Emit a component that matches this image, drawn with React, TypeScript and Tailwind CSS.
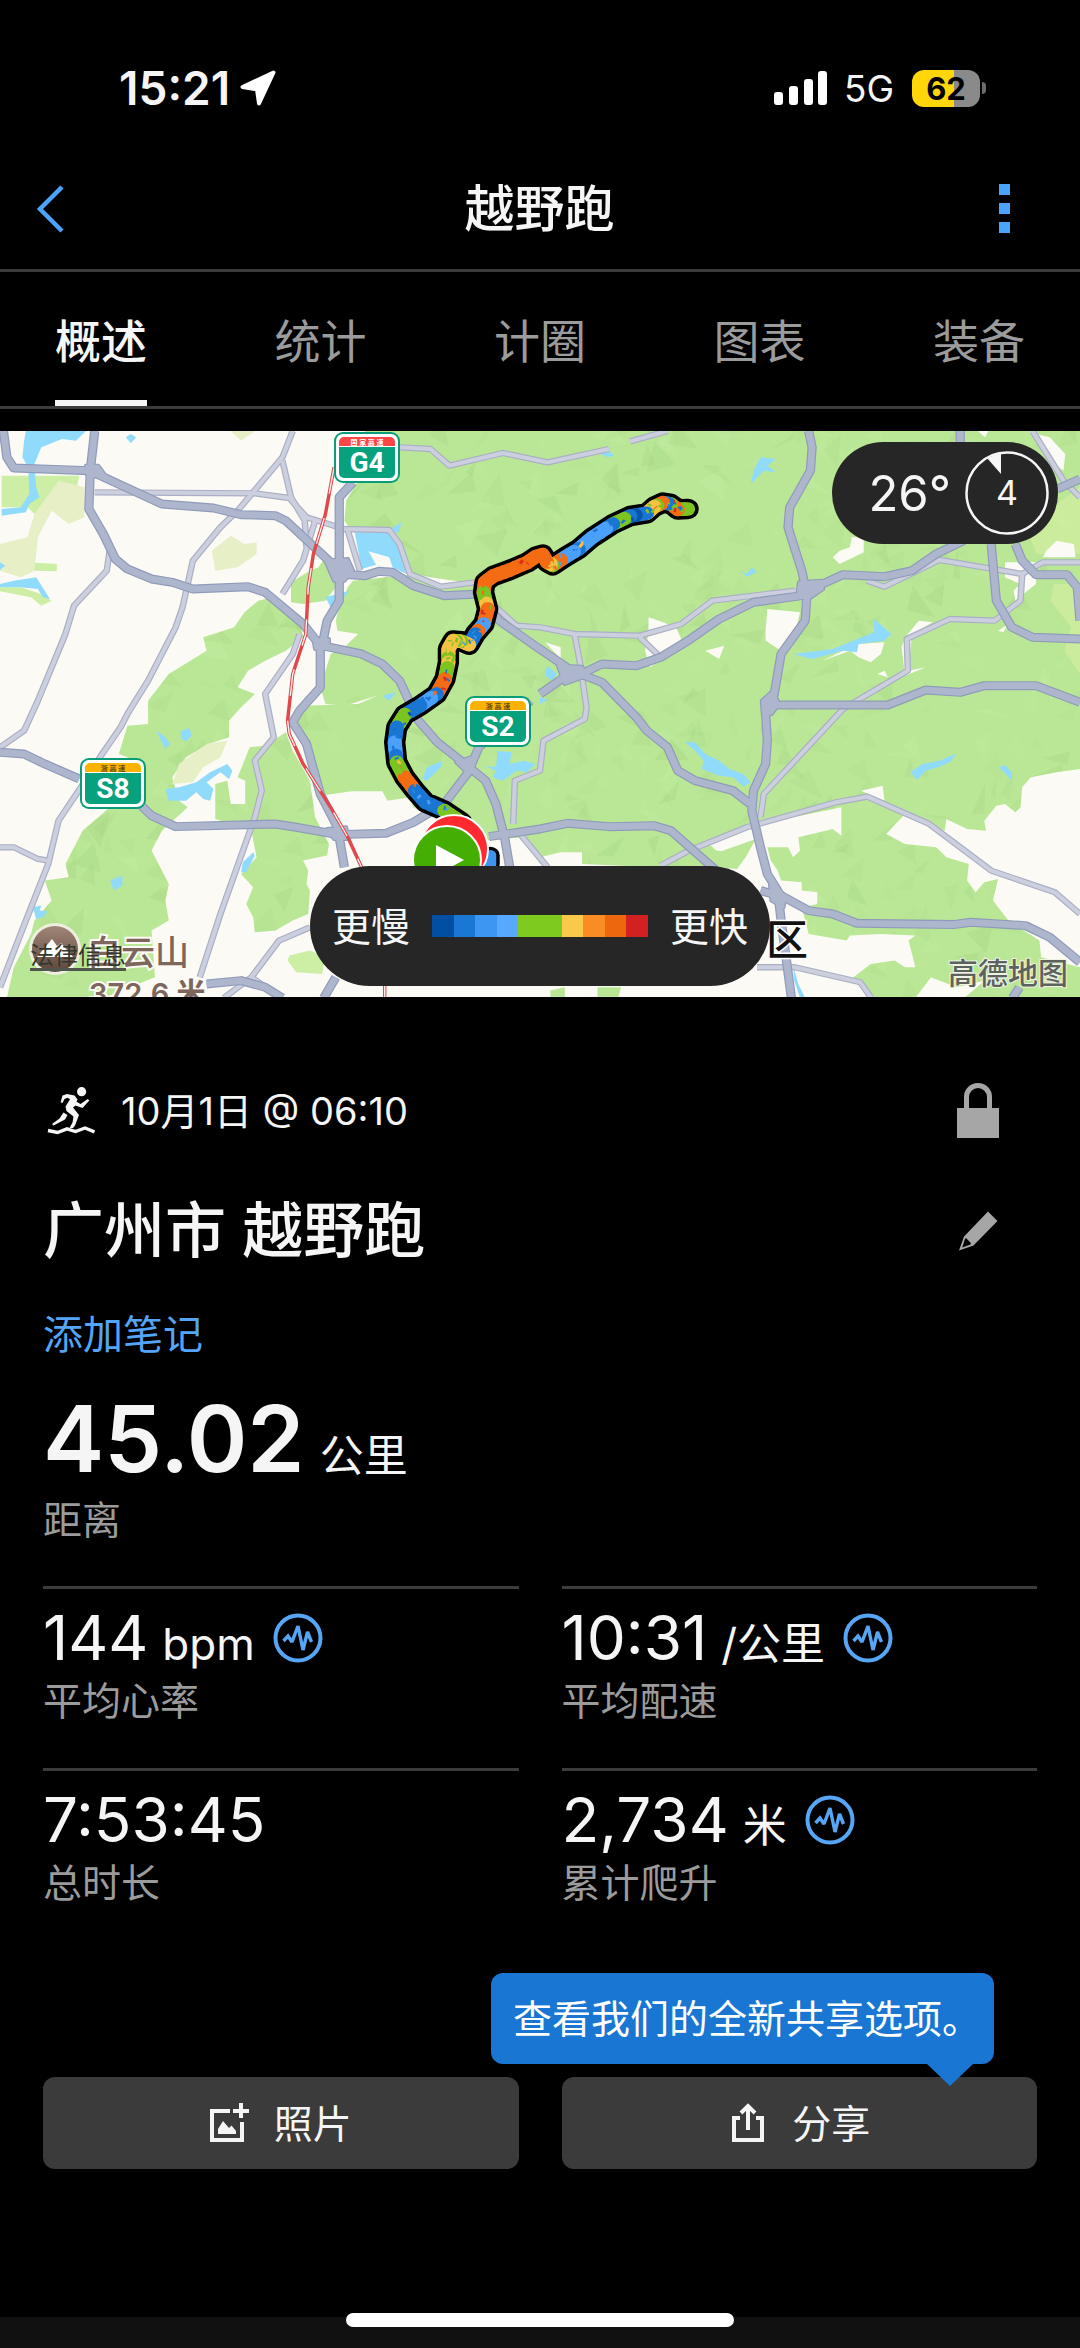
import React from "react";

const FONT =
  "font-[Inter,'Noto_Sans_CJK_SC',sans-serif]";

/* ---------- map data ---------- */

const GREEN = [
  "M1060 31H3136V1732H1568V1330L1520 1250L1400 1260L1260 1190L1200 1160L1190 1130L1125 1140L1110 1112L1020 1112L930 1125L880 960L855 900L880 855L1040 850L1095 825L1000 855L945 850L930 800L945 750L960 700L1000 680L1040 640L980 630L975 600L985 560L1010 500L1025 480L1160 465L1190 462L1240 490L1380 490L1250 470L1180 455L1130 330H1020L1000 300L1005 240L1040 180Z",
  "M845 485L900 450L925 440L950 400L970 440L975 500L945 540L880 550L845 545Z",
  "M750 540L790 530L830 580L870 600L880 650L830 690L770 720L720 750L690 800L740 820L700 860L665 900V950L605 970L540 1010L500 1070L520 1140L545 1160L470 1230L440 1290L490 1390L480 1440L490 1500L440 1530L450 1670L300 1732H20L40 1640L90 1540L100 1500L150 1440L130 1380L200 1370L190 1330L240 1230L375 1110L370 1010L345 1000L370 915L430 910V840L490 760L600 690L590 650L680 620L710 575Z",
  "M725 980L770 975L830 935L850 990L900 1080L915 1190L955 1270L950 1305L880 1320L895 1350L890 1390L900 1410L895 1480L850 1500L800 1530L740 1535L735 1490L715 1450L735 1400L700 1360L745 1310L730 1230L625 1195V1090L660 1080L670 1150H712V1080L690 1070Z",
].join("");

const LIGHT_GREEN =
  "M5 165H230L215 240L140 240L120 300L80 260H5ZM80 425L165 430V452L100 450ZM0 500L60 500L120 520L150 540L120 555L90 530L0 512ZM840 1605L900 1590L945 1610L935 1660L860 1655L835 1620Z";

const OLIVE =
  "M170 180L245 200V290L200 310L150 270L110 350L100 450L60 470L0 450V370L80 350L100 280ZM615 390L670 345L710 370L745 365V400L690 440L625 450ZM670 31H740L700 60ZM600 970L660 960L640 1010L590 1040L560 1085L500 1090L520 1030Z";

const LIME =
  "M3136 200L3040 270L2990 350L3010 400H3136ZM3060 490H3136V760L3090 690L3110 620L3050 540Z";

const LAND = [
  "M2048 1260L2208 1210L2443 1160V1245L2418 1225L2318 1250L2323 1290L2303 1310L2288 1280H2228L2238 1320L2258 1350L2268 1380L2328 1385V1410L2373 1415V1450L2328 1460L2348 1540L2458 1560L2468 1545L2558 1540L2658 1545L2638 1560L2658 1640H2628L2598 1620L2528 1630L2478 1670L2498 1700L2543 1732H1568V1310L1628 1295H1690V1330L1900 1340L2090 1340L2170 1300L2080 1290Z",
  "M3136 1045L3068 1055L2993 1070L2968 1100L2963 1160L2948 1175L2918 1150L2893 1155L2858 1200L2863 1230L2808 1225L2748 1195L2743 1230L2698 1210L2628 1180L2573 1240L2628 1270L2718 1280L2748 1310L2813 1330L2808 1380L2833 1415L2858 1385L2898 1375L2883 1440L2928 1500L3018 1560L3023 1610L3136 1640Z",
  "M2658 1732L2703 1670L2778 1700L2860 1680L2800 1732ZM2500 1110L2563 1095L2568 1140Z",
  "M2473 350H2508V395L2468 415L2438 430L2418 410L2438 390L2468 380ZM2228 565L2323 575L2308 640L2268 690L2223 660V630Z",
  "M1883 590L1913 600L1963 620L1978 655L1938 700L1888 740L1873 690L1883 640ZM2048 690L2103 675L2088 715ZM1583 665L1628 680V715ZM2493 670L2568 665L2558 700L2528 725L2493 710L2468 690L2388 720L2428 700Z",
  "M2628 650L2668 600L2708 605L2648 640L2638 750L2688 740L2628 765L2618 680ZM2548 760L2568 750L2578 770ZM2918 425H3008V490L2948 540L2943 510L2963 490L2918 470ZM3038 390L3068 360L3118 370L3123 410H3028ZM2988 35L3048 50L3093 100L3088 150L3048 120ZM2840 31H2870L2860 50ZM2898 630L2928 610L2913 635Z",
].join("");

const PATCHES =
  "M1598 1710L1640 1700V1732H1598ZM1735 1700H1803L1795 1732H1735ZM2100 1290L2195 1255L2165 1310L2140 1345L2090 1340Z";

const WATER = [
  "M75 31H250L220 60L180 55L120 80L100 130L105 200L115 230L85 250L75 275L5 285V265L60 260L85 220L82 140L65 110L70 60ZM365 50L380 40L395 50L380 68Z",
  "M1030 335H1130L1155 370L1180 460L1140 440L1130 410L1070 392L1092 432L1050 445ZM1135 325L1165 305L1160 330L1145 340ZM0 490L40 480L105 470L130 510L145 535L125 530L110 505L60 500L0 500ZM0 425L15 435L0 448Z",
  "M945 530L1015 510L990 540L960 560ZM1110 825L1150 815L1130 840ZM455 930L480 950L495 970L480 985L465 955ZM525 930L550 923L557 945L540 962L525 955Z",
  "M480 1105L520 1100L570 1085L610 1055L660 1030L675 1050L665 1075L640 1055L600 1085L620 1105L610 1140L590 1135L570 1115L540 1140H490ZM320 1380L355 1365V1395L330 1410ZM95 1460L120 1455L115 1470L138 1472L125 1490L105 1495ZM735 1295L740 1305L715 1355H700L705 1325Z",
  "M1225 1075L1240 1040L1285 1020L1280 1040L1240 1080ZM1405 1035L1440 1040L1445 990L1485 995L1480 1030L1520 1020L1555 1030L1530 1055L1500 1050L1460 1080L1430 1070L1440 1050ZM1588 735L1618 760L1603 780L1583 765ZM1568 830L1590 838L1568 850Z",
  "M2208 110L2253 115L2228 135L2253 155L2218 150L2180 190L2188 150ZM2148 450L2168 460L2183 440L2198 455L2168 468ZM2303 700L2418 685L2538 635V595L2588 640L2568 660L2493 670L2488 695L2448 690L2358 715ZM1733 95L1768 90L1783 105L1763 110Z",
  "M1988 965L2018 965L2048 1000L2088 1020L2118 1045L2158 1060L2180 1085L2158 1098L2128 1070L2088 1065L2038 1045L2043 1020L2018 990ZM2643 1055L2678 1030L2728 1020L2778 998L2758 1025L2728 1038L2688 1050L2663 1078ZM2901 1040L2918 1033L2938 1055L2936 1078ZM2303 1635L2318 1690L2338 1732H2323L2306 1680Z",
].join("");

const MINOR = [
  "M850 31L820 110L690 270L640 320L560 420L530 560L510 620L430 780L370 880L350 920L290 1010L235 1100L170 1200L140 1330L60 1540L0 1700",
  "M275 215L740 218L840 232L890 290L1000 325L1130 328L1160 370L1190 460L1280 498L1380 485",
  "M820 120L845 230L885 300L890 380M915 300L880 420L820 520M1010 330L1045 450",
  "M320 380L310 450L215 555L190 640L110 840L70 930L0 980",
  "M870 640L850 700L770 820L795 950L740 1020L760 1110L740 1190L640 1480L580 1670",
  "M0 1280H40L110 1315L140 1320",
  "M1160 80L1250 85L1305 135L1460 97L1590 125L1768 85M1830 62L1938 31",
  "M900 1520L810 1560L730 1670L650 1732M730 1670L800 1720",
  "M1568 620L1668 640L1858 645L1978 610L2068 540L2308 510M1668 640L1683 720L1703 860L1698 895L1578 960L1568 1050L1495 1080L1490 1210M1440 560L1500 615L1568 620M1858 650L1913 705",
  "M2518 480L2568 498L2728 418L2968 460L3028 425H3136M2968 460L2963 540L2888 600L2758 595L2633 655L2636 750L2448 865L2218 1120L2208 1190",
  "M1918 1335L2000 1290L2168 1220L2428 1145L2518 1128L2698 1210L2878 1350L3063 1415L3136 1480",
  "M2198 1640H2308L2498 1685L2530 1732M2998 31L3088 180L3136 230M1510 1240L1590 1340",
];

const MAJOR = [
  "M10 31L20 110L40 142L260 150L470 250L620 262L700 282L800 285L830 300L960 425L985 460L1060 465L1100 452L1140 455L1200 495L1290 525L1390 520L1450 600L1560 680L1660 750",
  "M275 31L262 150L258 265L300 340L335 415L370 445L440 475L500 485L560 505L720 498L770 515L880 610L930 675V800L870 870L850 905L890 970L930 1120L980 1220L1000 1340",
  "M1025 185L985 230V540L950 600L935 675L1050 700L1110 730L1160 780L1215 900L1270 965L1350 1030L1410 1080L1440 1150L1465 1250L1480 1340",
  "M0 995L70 1000L130 1030L230 1075M410 1155L440 1185L510 1218L800 1210L860 1220L980 1242L1120 1238L1200 1205L1290 1150L1330 1095L1360 1055L1390 980L1540 840",
  "M1420 1248L1568 1225L1648 1208L1768 1218L1898 1215L1948 1230L2080 1350",
  "M1660 750L1748 785L1848 890L1878 930L1938 980L1968 1050L2018 1080L2128 1110L2178 1150",
  "M1568 820L1638 770L1698 755L1748 730L1848 735L1918 710L1998 660L2088 595L2188 545L2328 525L2388 490L2448 462L2568 468L2648 450L2718 400L2798 360",
  "M2348 31L2358 80L2353 150L2293 260L2288 320L2328 450L2343 520L2338 600L2268 700L2248 820L2223 880L2228 960L2223 1030L2188 1110L2183 1170L2208 1280L2228 1360L2258 1410L2268 1500L2298 1732",
  "M2240 853H2578L2688 808L2788 815L2858 795H3008L3136 845",
  "M2208 1410L2278 1430L2348 1470L2418 1480L2488 1508L2768 1512L2818 1505L2978 1515L3048 1550L3136 1625",
  "M2878 370L2893 540L2938 620L2998 650L3136 655M2948 370L2968 420L3008 462H3098L3128 500L3136 600M3070 205L3136 175M2788 31V65",
  "M600 1690L700 1680L770 1700L820 1732M940 1732L975 1670M2940 1732L2960 1700",
];

const JUNCTIONS =
  "M1620 735L1690 738L1706 765L1640 790ZM2320 485L2385 480L2390 505L2355 530L2315 525ZM2212 840L2245 810L2262 850L2240 880L2215 880ZM945 420L1010 415L1025 450L1000 480L970 480ZM910 655L955 655L955 685L915 685ZM950 1225L1005 1220L1012 1255L970 1255ZM250 135L285 135L310 170L255 165ZM1325 1025L1380 1005L1375 1035L1350 1050ZM2235 1380L2280 1425L2275 1460L2240 1440Z";

const RAIL = [
  "M970 140L945 280L910 400L895 500L888 640L850 760L835 900L840 940L880 1030L960 1160L1010 1250L1050 1340M1117 1690V1732",
];

/* Track points with the pace colour code of the section that starts there. */
const TRACK: [number, number, string][] = [
  [1998, 265, "gob"], [1968, 266, "or"], [1948, 250, "bg"], [1925, 246, "og"], [1900, 258, "yg"], [1878, 278, "nb"],
  [1830, 286, "gb"], [1780, 310, "lb"], [1720, 350, "lyg"], [1680, 385, "lb"], [1640, 410, "ogl"],
  [1605, 434, "yg"], [1588, 424, "o"], [1576, 402, "o"], [1556, 408, "or"], [1530, 426, "ro"], [1480, 448, "o"], [1432, 466, "o"],
  [1408, 485, "o"], [1404, 515, "goy"], [1416, 565, "or"], [1405, 610, "lo"], [1380, 640, "bl"], [1362, 672, "yl"],
  [1340, 662, "gy"], [1316, 660, "yg"], [1302, 685, "yg"], [1302, 725, "gby"], [1292, 775, "or"], [1268, 820, "lb"],
  [1220, 855, "bn"], [1175, 882, "gb"], [1152, 920, "bn"], [1146, 965, "lb"], [1152, 1025, "gyo"],
  [1175, 1070, "o"], [1205, 1110, "bl"], [1235, 1145, "bl"], [1290, 1170, "gl"], [1340, 1205, "b"],
];

const PACE: Record<string, string> = {
  n: "#0a55ab", b: "#1976d2", l: "#4aa0fa", g: "#7cc420",
  y: "#f5c244", o: "#f46c14", r: "#dc2c1e",
};

function random(seed: number) {
  let s = seed;
  return () => {
    s = (s + 0x6d2b79f5) | 0;
    let t = Math.imul(s ^ (s >>> 15), 1 | s);
    t = (t + Math.imul(t ^ (t >>> 7), 61 | t)) ^ t;
    return ((t ^ (t >>> 14)) >>> 0) / 4294967296;
  };
}

function trackPieces() {
  const rnd = random(11);
  const out: { d: string; c: string }[] = [];
  for (let i = 0; i < TRACK.length - 1; i++) {
    const [x1, y1, code] = TRACK[i];
    const [x2, y2] = TRACK[i + 1];
    const n = 3;
    for (let k = 0; k < n; k++) {
      const ax = x1 + ((x2 - x1) * k) / n;
      const ay = y1 + ((y2 - y1) * k) / n;
      const bx = x1 + ((x2 - x1) * (k + 1)) / n;
      const by = y1 + ((y2 - y1) * (k + 1)) / n;
      const pick = rnd() > 0.45 ? 0 : Math.floor(rnd() * code.length);
      out.push({ d: `M${ax} ${ay}L${bx} ${by}`, c: PACE[code[pick]] });
    }
  }
  return out;
}

function trackFlecks() {
  const rnd = random(23);
  return TRACK.flatMap(([x, y, code], i) => {
    if (i === TRACK.length - 1) return [];
    const [x2, y2] = TRACK[i + 1];
    return [0.2, 0.5, 0.8].map((t) => {
      const fx = x + (x2 - x) * t + (rnd() - 0.5) * 22;
      const fy = y + (y2 - y) * t + (rnd() - 0.5) * 22;
      return {
        d: `M${fx.toFixed(1)} ${fy.toFixed(1)}l${(rnd() * 16 - 8).toFixed(1)} ${(rnd() * 12 - 6).toFixed(1)}`,
        c: PACE[code[Math.floor(rnd() * code.length)]],
      };
    });
  });
}

function hillFacets() {
  const rnd = random(5);
  return Array.from({ length: 700 }, () => {
    const x = rnd() * 3136;
    const y = rnd() * 1732;
    const pts = [0, 1, 2].map((k) => {
      const angle = (k * 2 * Math.PI) / 3 + rnd() * 1.6;
      const r = 14 + rnd() * 52;
      return `${(x + Math.cos(angle) * r).toFixed(1)} ${(y + Math.sin(angle) * r).toFixed(1)}`;
    });
    return {
      d: `M${pts.join("L")}Z`,
      c: rnd() > 0.4 ? "#a0d07e" : "#c6eea6",
      o: 0.08 + rnd() * 0.22,
    };
  });
}

const TRACK_LINE = "M" + TRACK.map(([x, y]) => `${x} ${y}`).join("L");
const PIECES = trackPieces();
const FLECKS = trackFlecks();
const FACETS = hillFacets();

function RoadSign({ x, y, band, text, tag, tagFill }: {
  x: number; y: number; band: string; text: string; tag: string; tagFill: string;
}) {
  return (
    <g transform={`translate(${x} ${y})`}>
      <rect width="66" height="51" rx="9" fill="#0a9c78" />
      <rect x="2" y="2" width="62" height="47" rx="7" fill="#fff" />
      <path d="M5 15H61V41a5 5 0 0 1-5 5H10a5 5 0 0 1-5-5Z" fill="#08a17d" />
      <path d="M5 14V10a5 5 0 0 1 5-5H56a5 5 0 0 1 5 5V14Z" fill={band} />
      <text x="33" y="13" textAnchor="middle" fontSize="7" fontWeight="700" fill={tagFill}>{tag}</text>
      <text x="33" y="40" textAnchor="middle" fontSize="28" fontWeight="700" fill="#fff" className="font-[Roboto,sans-serif]">{text}</text>
    </g>
  );
}

function RouteMap() {
  return (
    <svg viewBox="0 0 1080 566" preserveAspectRatio="xMidYMid slice" className="block size-full" role="img" aria-label="路线地图">
      <defs>
        <clipPath id="woods"><path d={GREEN} /></clipPath>
        <linearGradient id="peak" x1="0" y1="0" x2="0" y2="1">
          <stop offset="0" stopColor="#a08679" />
          <stop offset="1" stopColor="#5f463b" />
        </linearGradient>
      </defs>
      <rect width="1080" height="566" fill="#fbfaf4" />
      <g transform="scale(.3444 .3333) translate(0 -31)" strokeLinejoin="round">
        <path d={GREEN} fill="#bae796" />
        <g clipPath="url(#woods)">
          {FACETS.map((f, i) => <path key={i} d={f.d} fill={f.c} opacity={f.o} />)}
        </g>
        <path d={LIGHT_GREEN} fill="#cdefa5" />
        <path d={OLIVE} fill="#e6efc6" />
        <path d={LIME} fill="#cfec9f" opacity=".8" />
        <path d={LAND} fill="#fbfaf4" />
        <path d={PATCHES} fill="#bae796" />
        <path d={WATER} fill="#90dbfb" />
        <g fill="none">
          {MINOR.map((d) => <path key={d} d={d} stroke="#abafc6" strokeWidth="19" />)}
          {MINOR.map((d) => <path key={d} d={d} stroke="#cccfdd" strokeWidth="12" />)}
          <path d={JUNCTIONS} stroke="#8f9bba" strokeWidth="12" />
          {MAJOR.map((d) => <path key={d} d={d} stroke="#8f9bba" strokeWidth="27" />)}
          {MAJOR.map((d) => <path key={d} d={d} stroke="#adb6cc" strokeWidth="20" />)}
          <path d={JUNCTIONS} fill="#adb6cc" stroke="#adb6cc" strokeWidth="5" />
          {RAIL.map((d) => (
            <g key={d}>
              <path d={d} stroke="#e0484c" strokeWidth="10" />
              <path d={d} stroke="#fdeeee" strokeWidth="4" strokeDasharray="80 75" />
            </g>
          ))}
          <g strokeLinecap="round">
            <path d="M1424 1305V1330" stroke="#000" strokeWidth="54" />
            <path d="M1424 1305V1330" stroke="#3f95ee" strokeWidth="34" />
            <path d={TRACK_LINE} stroke="#000" strokeWidth="62" />
            {PIECES.map((p, i) => <path key={i} d={p.d} stroke={p.c} strokeWidth="41" />)}
          </g>
          {FLECKS.map((f, i) => <path key={i} d={f.d} stroke={f.c} strokeWidth="13" />)}
        </g>
      </g>

      <circle cx="454" cy="418" r="34" fill="#ff2a30" stroke="#fff" strokeWidth="2" />
      <circle cx="447" cy="429" r="34" fill="#45ae02" stroke="#fff" strokeWidth="2" />
      <path d="M436 414L464 429L436 444Z" fill="#fff" />

      <RoadSign x={334} y={1} band="#fc4545" text="G4" tag="国 家 高 速" tagFill="#fff" />
      <RoadSign x={465} y={265} band="#fbb200" text="S2" tag="浙 高 速" tagFill="#5c4a10" />
      <RoadSign x={80} y={327} band="#fbb200" text="S8" tag="浙 高 速" tagFill="#5c4a10" />

      <circle cx="55" cy="518" r="26" fill="#f3f0e6" opacity=".9" />
      <circle cx="55" cy="518" r="23" fill="url(#peak)" />
      <path d="M37 526L47 514L52 508L57 515L61 512L73 526Z" fill="#fff" />
      <g fontWeight="500" fill="#7d665b" stroke="#fbfaf4" strokeWidth="4" paintOrder="stroke">
        <text x="87" y="534" fontSize="34">白云山</text>
        <text x="89" y="573" fontSize="29" fontWeight="600">372.6 米</text>
      </g>
      <text x="766" y="524" fontSize="42" fontWeight="500" fill="#111" stroke="#fff" strokeWidth="3" paintOrder="stroke">区</text>
      <text x="948" y="553" fontSize="30" fontWeight="500" fill="#5c625c" stroke="#eef3e6" strokeWidth="2" paintOrder="stroke">高德地图</text>
    </svg>
  );
}

/* ---------- small icons ---------- */

function PulseIcon() {
  return (
    <svg viewBox="0 0 50 50" className="size-[50px] shrink-0" fill="none" stroke="#57a5f5" aria-hidden="true">
      <circle cx="25" cy="25" r="22.5" strokeWidth="4" />
      <path d="M10.500 28L15 23L19 29L25 13L30 37L34.500 19L38.500 29" strokeWidth="3.400" strokeLinejoin="miter" strokeMiterlimit="2" />
    </svg>
  );
}

function StatusBar() {
  return (
    <div className="flex h-[148px] items-center justify-between pr-[94px] pb-[30px] pl-[119px] pt-[58px]">
      <div className="flex items-center gap-2.5">
        <span className="text-[46px] leading-none font-semibold">15:21</span>
        <svg viewBox="0 0 36 36" className="size-9" aria-hidden="true">
          <path d="M33.500 2.500L2.500 17L17 19.500L19 33.500Z" fill="#fff" stroke="#fff" strokeWidth="4" strokeLinejoin="round" />
        </svg>
      </div>
      <div className="flex items-center">
        <svg viewBox="0 0 54 34" className="h-[34px] w-[54px]" fill="#fff" aria-hidden="true">
          <rect x="0" y="21" width="9" height="13" rx="3" />
          <rect x="15" y="15" width="9" height="19" rx="3" />
          <rect x="30" y="8" width="9" height="26" rx="3" />
          <rect x="44" y="0" width="9" height="34" rx="3" />
        </svg>
        <span className="ml-4 text-[37px] leading-none">5G</span>
        <div className="ml-[18px] flex h-[37px] w-[68px] items-center justify-center rounded-xl bg-linear-to-r from-[#ffd60a] from-[62%] to-[#8a8a8a] to-[62%]">
          <span className="text-[31px] leading-none font-bold text-black">62</span>
        </div>
        <div className="ml-0.5 h-3 w-1 rounded-r-full bg-[#6b6b6b]" />
      </div>
    </div>
  );
}

const TABS = ["概述", "统计", "计圈", "图表", "装备"];
const SCALE = [
  "bg-[#004fa3]", "bg-[#1a77d3]", "bg-[#3c96f2]", "bg-[#56a9ff]", "bg-[#7fca1e]",
  "bg-[#7fca1e]", "bg-[#f9c94c]", "bg-[#fa8c26]", "bg-[#ec670d]", "bg-[#d32020]",
];

const STATS = [
  { value: "144", unit: "bpm", label: "平均心率", icon: true },
  { value: "10:31", unit: "/公里", label: "平均配速", icon: true },
  { value: "7:53:45", unit: "", label: "总时长", icon: false },
  { value: "2,734", unit: "米", label: "累计爬升", icon: true },
];

export default function App() {
  return (
    <div className={`flex min-h-screen flex-col bg-black text-[#f5f5f5] ${FONT}`}>
      <StatusBar />

      <header className="flex h-[124px] items-center justify-between border-b-3 border-[#3c3c3c] pr-[70px] pl-9">
        <button aria-label="返回">
          <svg viewBox="0 0 28 48" className="h-12 w-7" fill="none" aria-hidden="true">
            <path d="M26 2L4 24L26 46" stroke="#4ba3fc" strokeWidth="4.500" />
          </svg>
        </button>
        <h1 className="pl-4 text-[50px] leading-none font-medium">越野跑</h1>
        <button aria-label="更多" className="flex flex-col gap-2">
          <span className="size-[11px] bg-[#4ba3fc]" />
          <span className="size-[11px] bg-[#4ba3fc]" />
          <span className="size-[11px] bg-[#4ba3fc]" />
        </button>
      </header>

      <nav className="flex h-[137px] justify-between border-b-3 border-[#3c3c3c] px-[55px]">
        {TABS.map((t, i) => (
          <button
            key={t}
            className={
              i === 0
                ? "border-y-6 border-t-transparent border-b-[#f5f5f5] pt-1 text-[46px] leading-none font-medium"
                : "border-y-6 border-transparent pt-1 text-[46px] leading-none text-[#9b9b9b]"
            }
          >
            {t}
          </button>
        ))}
      </nav>

      <section className="relative mt-[22px] h-[566px] overflow-hidden">
        <RouteMap />
        <a href="#legal" className="absolute bottom-[26px] left-[30px] border-b-3 border-[#50564c] text-[24px] leading-none text-[#33382f]">
          法律信息
        </a>
        <div className="absolute top-[11px] right-[22px] flex h-[102px] items-center gap-3.5 rounded-full bg-[#262626] pr-[9px] pl-9">
          <span className="text-[49px] leading-none">26°</span>
          <svg viewBox="0 0 84 84" className="size-[84px]" aria-hidden="true">
            <circle cx="42" cy="42" r="40.500" fill="none" stroke="#f5f5f5" strokeWidth="2.500" />
            <path d="M22 7L36 2V23Z" fill="#f5f5f5" />
            <text x="42" y="54" textAnchor="middle" fontSize="34" fill="#f5f5f5">4</text>
          </svg>
        </div>
        <div className="absolute inset-x-0 bottom-[11px] flex justify-center">
          <div className="flex h-[120px] items-center gap-[22px] rounded-full bg-[#262626] px-[22px]">
            <span className="text-[39px] leading-none">更慢</span>
            <div className="flex h-[22px] w-[216px]">
              {SCALE.map((c, i) => <span key={i} className={`flex-1 ${c}`} />)}
            </div>
            <span className="text-[39px] leading-none">更快</span>
          </div>
        </div>
      </section>

      <main className="flex flex-col px-[43px] pt-[86px]">
        <div className="flex h-14 items-center justify-between pr-[37px] pl-1">
          <div className="flex items-center gap-[26px]">
            <svg viewBox="0 0 48 48" className="size-12" fill="#f5f5f5" aria-hidden="true">
              <circle cx="34.600" cy="4.700" r="4.600" />
              <path d="M15.500 8.500L20 7L27.500 8.500L30.500 12.500L29.500 14.800L33.500 17L40.800 12L42.300 13.500L35.500 21L28.500 18.500L26 20.500L32 28L28 38.500L26 41H22.500L25.500 35.500L26.500 29.500L19.500 24L18.500 19.500L23 12.200L20.500 10.800L17.500 12L15.500 16L13.600 15.200Z" />
              <path d="M16.500 25.500L20.500 28L18 32.500L6.500 38.500L5 37L12.500 31.500Z" />
              <path d="M1 43.500L10.500 45.500L20 41.800L28.500 44.500L38 41L47.500 45" fill="none" stroke="#f5f5f5" strokeWidth="3.400" />
            </svg>
            <span className="text-[38px] leading-none">10月1日 @ 06:10</span>
          </div>
          <svg viewBox="0 0 44 56" className="h-14 w-11" fill="#a6a6a6" role="img" aria-label="私密">
            <path d="M1 25H43V55H1Z" />
            <path d="M10.500 26V14a11.500 11.500 0 0 1 23 0V26" fill="none" stroke="#a6a6a6" strokeWidth="5" />
          </svg>
        </div>

        <div className="mt-[62px] flex h-[60px] items-center justify-between pr-[39px]">
          <h2 className="text-[61px] leading-none font-medium">广州市 越野跑</h2>
          <button aria-label="编辑">
            <svg viewBox="0 0 40 40" className="size-10" fill="#a6a6a6" aria-hidden="true">
              <path d="M30 0.500L39.500 10L15.500 34.500L1 39.500L6 25.500ZM6.800 28.500L4.200 36.500L12.500 33.500L12.800 32L8 27Z" fillRule="evenodd" />
            </svg>
          </button>
        </div>

        <button className="mt-[50px] h-12 self-start text-[40px] leading-none text-[#54a5f8]">添加笔记</button>

        <div className="mt-[34px] flex items-baseline gap-[15px]">
          <span className="text-[92px] leading-none font-semibold">45.02</span>
          <span className="text-[44px] leading-none">公里</span>
        </div>
        <p className="mt-[11px] text-[39px] leading-12 text-[#9b9b9b]">距离</p>

        <div className="mt-[42px] grid grid-cols-2 gap-x-[43px]">
          {STATS.map((s) => (
            <div key={s.label} className="h-[182px] border-t-3 border-[#3c3c3c] pt-[17px]">
              <div className="flex h-16 items-center gap-[18px]">
                <div className="flex items-baseline gap-[14px]">
                  <span className="text-[62px] leading-none">{s.value}</span>
                  {s.unit && <span className="text-[44px] leading-none">{s.unit}</span>}
                </div>
                {s.icon && <PulseIcon />}
              </div>
              <p className="mt-[7px] text-[39px] leading-12 text-[#9b9b9b]">{s.label}</p>
            </div>
          ))}
        </div>

        <div className="mt-[127px] grid grid-cols-2 gap-x-[43px]">
          <button className="flex h-[92px] items-center justify-center gap-6 rounded-xl bg-[#3b3b3b]">
            <svg viewBox="0 0 40 40" className="size-10" fill="#f5f5f5" aria-hidden="true">
              <path d="M0 6H20V10H4V35H30V19H34V39H0Z" />
              <path d="M29 0H33V6H39V10H33V15H29V10H23V6H29Z" />
              <path d="M8 31V26L13 18L19 25L21.500 22.500L26 28V31Z" />
            </svg>
            <span className="text-[39px] leading-none">照片</span>
          </button>
          <div className="relative">
            <button className="flex h-[92px] w-full items-center justify-center gap-6 rounded-xl bg-[#3b3b3b]">
              <svg viewBox="0 0 40 40" className="size-10" fill="none" stroke="#f5f5f5" strokeWidth="4" aria-hidden="true">
                <path d="M12 15H6V37H34V15H28" />
                <path d="M20 27V4M13 10L20 3L27 10" />
              </svg>
              <span className="text-[39px] leading-none">分享</span>
            </button>
            <div role="tooltip" className="absolute right-[43px] bottom-[105px] flex h-[91px] items-center rounded-xl bg-[#1976d2] pr-[13px] pl-[22px] whitespace-nowrap text-white">
              <span className="text-[39px] leading-none">查看我们的全新共享选项。</span>
              <svg viewBox="0 0 46 22" className="absolute top-full right-[21px] h-[22px] w-[46px]" aria-hidden="true">
                <path d="M0 0H46L23 22Z" fill="#1976d2" />
              </svg>
            </div>
          </div>
        </div>
      </main>

      <footer className="relative mt-auto flex h-[31px] justify-center bg-[#111111]">
        <div className="absolute -top-1 h-[14px] w-[388px] rounded-full bg-white" />
      </footer>
    </div>
  );
}
